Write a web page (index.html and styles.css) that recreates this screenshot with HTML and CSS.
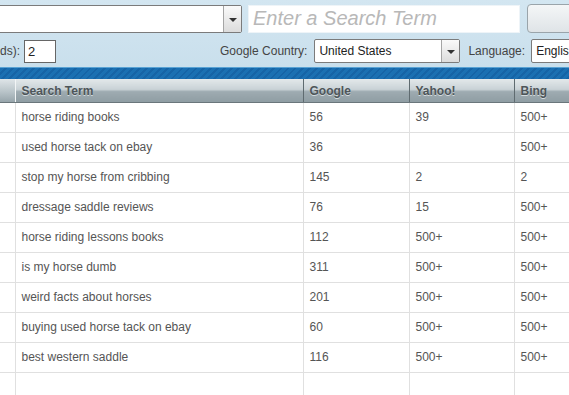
FILE: index.html
```html
<!DOCTYPE html>
<html>
<head>
  <title>Keyword Rank Checker</title>
  <link rel="stylesheet" href="styles.css">
</head>
<body>
  <div class="toolbar">
    <div class="row row-top">
      <div class="combo combo-site">
        <span class="combo-text"></span>
        <span class="combo-btn"><i class="arrow"></i></span>
      </div>
      <input class="search" type="text" placeholder="Enter a Search Term">
      <button class="go" type="button"></button>
    </div>
    <div class="row row-opts">
      <label class="lbl lbl-depth">ds):</label>
      <input class="depth" type="text" value="2">
      <label class="lbl lbl-country">Google Country:</label>
      <div class="combo combo-country">
        <span class="combo-text">United States</span>
        <span class="combo-btn"><i class="arrow"></i></span>
      </div>
      <label class="lbl lbl-lang">Language:</label>
      <div class="combo combo-lang">
        <span class="combo-text">English</span>
      </div>
    </div>
  </div>
  <div class="band"></div>

  <table class="results">
    <colgroup>
      <col class="c-num">
      <col class="c-term">
      <col class="c-g">
      <col class="c-y">
      <col class="c-b">
    </colgroup>
    <thead>
      <tr>
        <th></th>
        <th>Search Term</th>
        <th>Google</th>
        <th>Yahoo!</th>
        <th>Bing</th>
      </tr>
    </thead>
    <tbody>
      <tr><td></td><td>horse riding books</td><td>56</td><td>39</td><td>500+</td></tr>
      <tr><td></td><td>used horse tack on ebay</td><td>36</td><td></td><td>500+</td></tr>
      <tr><td></td><td>stop my horse from cribbing</td><td>145</td><td>2</td><td>2</td></tr>
      <tr><td></td><td>dressage saddle reviews</td><td>76</td><td>15</td><td>500+</td></tr>
      <tr><td></td><td>horse riding lessons books</td><td>112</td><td>500+</td><td>500+</td></tr>
      <tr><td></td><td>is my horse dumb</td><td>311</td><td>500+</td><td>500+</td></tr>
      <tr><td></td><td>weird facts about horses</td><td>201</td><td>500+</td><td>500+</td></tr>
      <tr><td></td><td>buying used horse tack on ebay</td><td>60</td><td>500+</td><td>500+</td></tr>
      <tr><td></td><td>best western saddle</td><td>116</td><td>500+</td><td>500+</td></tr>
      <tr><td></td><td></td><td></td><td></td><td></td></tr>
    </tbody>
  </table>
</body>
</html>
```

FILE: styles.css
```css
html, body {
  margin: 0;
  padding: 0;
  overflow: hidden;
  background-color: #fff;
  font-family: "Liberation Sans", Arial, sans-serif;
}

.toolbar {
  height: 67px;
  background: linear-gradient(#d3e6f1, #c9dfec);
  box-sizing: border-box;
  padding-top: 4px;
}

.row {
  display: flex;
  align-items: center;
  white-space: nowrap;
}

.row > * {
  flex-shrink: 0;
}

.row-top {
  height: 29px;
}

.row-opts {
  margin-top: 6px;
  height: 24px;
}

.combo {
  display: flex;
  box-sizing: border-box;
  background-color: #fff;
  border: 1px solid #7b7b7b;
  border-radius: 2px;
  font-size: 12px;
  color: #222;
}

.combo-site {
  width: 253px;
  height: 28px;
  margin-left: -11px;
  margin-top: 1px;
}

.combo-text {
  flex: 1;
  padding-left: 4px;
  align-self: center;
  overflow: hidden;
}

.combo-btn {
  width: 17px;
  display: flex;
  align-items: center;
  justify-content: center;
  border-left: 1px solid #a5a5a5;
  background: linear-gradient(#fafafa, #dcdcdc);
}

.arrow {
  width: 0;
  height: 0;
  border-left: 4px solid transparent;
  border-right: 4px solid transparent;
  border-top: 4px solid #333;
  margin-top: 2px;
}

.search {
  box-sizing: border-box;
  margin-left: 6px;
  width: 272px;
  height: 28px;
  border: 1px solid #eef4f8;
  background-color: #fff;
  padding: 0 0 0 4px;
  font-family: "Liberation Sans", Arial, sans-serif;
  font-size: 20px;
  font-style: italic;
}

.search::placeholder {
  color: #b8b8b8;
}

.go {
  margin-left: 7px;
  width: 60px;
  height: 29px;
  border: 1px solid #9aa4aa;
  border-radius: 4px;
  background: linear-gradient(#f4f6f7, #dfe4e7);
}

.lbl {
  font-size: 12px;
  color: #444;
}

.depth {
  box-sizing: border-box;
  margin-left: 4px;
  width: 32px;
  height: 23px;
  border: 1px solid #666;
  padding: 0 0 0 3px;
  font-family: "Liberation Sans", Arial, sans-serif;
  font-size: 13px;
  color: #222;
}

.lbl-country {
  margin-left: 164px;
}

.combo-country {
  margin-left: 7px;
  width: 146px;
  height: 24px;
}

.lbl-lang {
  margin-left: 8px;
}

.combo-lang {
  margin-left: 6px;
  width: 60px;
  height: 24px;
}

.band {
  height: 11px;
  border-top: 1px solid #58a2d4;
  background-color: #1b70b2;
  background-image: repeating-linear-gradient(135deg, #1b70b2 0, #1b70b2 3px, #1664a6 3px, #1664a6 5px);
}

.results {
  border-collapse: collapse;
  table-layout: fixed;
  width: 639px;
  font-size: 12px;
  color: #555;
}

.c-num { width: 15px; }
.c-term { width: 288px; }
.c-g { width: 106px; }
.c-y { width: 105px; }
.c-b { width: 125px; }

.results th {
  height: 23px;
  padding: 1px 0 0 6px;
  text-align: left;
  font-weight: bold;
  color: #4d5559;
  text-shadow: 0 1px 0 #d4dbde;
  background: linear-gradient(#e3e8ea 0, #c9d2d6 45%, #9eabb1 55%, #8f9da3 100%);
  border-left: 1px solid #5f6b70;
  border-bottom: 1px solid #6a767b;
  box-sizing: border-box;
}

.results th:first-child {
  border-left: none;
  border-right: 1px solid #f2f5f6;
  background: linear-gradient(#dfe5e8 0, #b9c4c9 55%, #97a5ab 100%);
}

.results td {
  height: 30px;
  padding: 0 0 0 6px;
  border-left: 1px solid #e0e0e0;
  border-bottom: 1px solid #e0e0e0;
  box-sizing: border-box;
  overflow: hidden;
  white-space: nowrap;
}

.results td:first-child {
  border-left: none;
}
```
